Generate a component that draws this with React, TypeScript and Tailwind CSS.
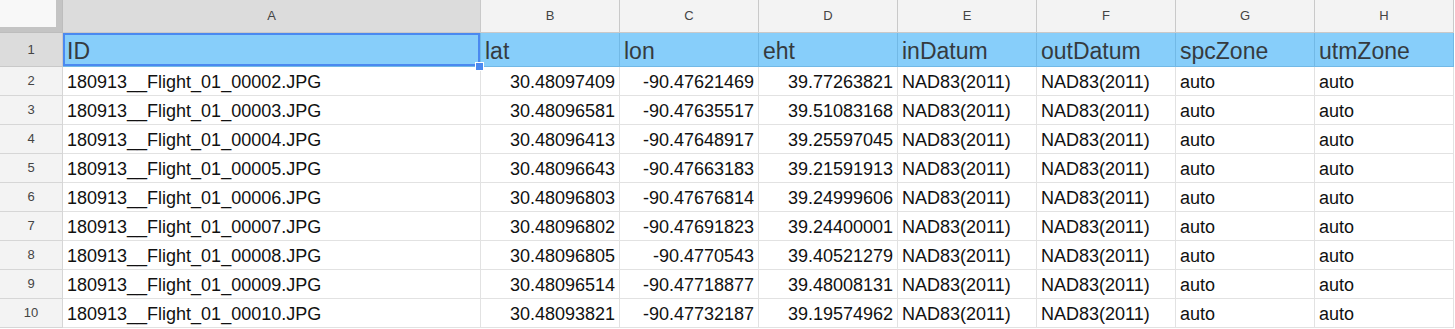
import React from 'react';

const cols = ['A', 'B', 'C', 'D', 'E', 'F', 'G', 'H'];
const headers = ['ID', 'lat', 'lon', 'eht', 'inDatum', 'outDatum', 'spcZone', 'utmZone'];

const rows: [string, string, string, string][] = [
  ['180913__Flight_01_00002.JPG', '30.48097409', '-90.47621469', '39.77263821'],
  ['180913__Flight_01_00003.JPG', '30.48096581', '-90.47635517', '39.51083168'],
  ['180913__Flight_01_00004.JPG', '30.48096413', '-90.47648917', '39.25597045'],
  ['180913__Flight_01_00005.JPG', '30.48096643', '-90.47663183', '39.21591913'],
  ['180913__Flight_01_00006.JPG', '30.48096803', '-90.47676814', '39.24999606'],
  ['180913__Flight_01_00007.JPG', '30.48096802', '-90.47691823', '39.24400001'],
  ['180913__Flight_01_00008.JPG', '30.48096805', '-90.4770543', '39.40521279'],
  ['180913__Flight_01_00009.JPG', '30.48096514', '-90.47718877', '39.48008131'],
  ['180913__Flight_01_00010.JPG', '30.48093821', '-90.47732187', '39.19574962'],
];

export default function App() {
  return (
    <div className="w-[1455px] h-[329px] overflow-hidden bg-white font-['Liberation_Sans',Arial,sans-serif]">
      <div className="grid grid-cols-[63px_418px_repeat(7,139px)] grid-rows-[33px_34px_repeat(9,29px)]">
        {/* corner */}
        <div className="bg-[#c4c4c4] border-r border-b border-[#bdbdbd] flex">
          <div className="w-[56px] h-[27px] bg-[#f8f8f8]" />
        </div>
        {cols.map((c, i) => (
          <div
            key={c}
            className={`flex items-center justify-center border-r border-b border-[#c9c9c9] text-[13px] text-[#444] ${
              i === 0 ? 'bg-[#dcdcdc]' : 'bg-[#f3f3f3]'
            }`}
          >
            {c}
          </div>
        ))}

        {/* row 1 */}
        <div className="flex items-center justify-center bg-[#dcdcdc] border-r border-b border-[#c9c9c9] text-[13px] text-[#444]">
          1
        </div>
        {headers.map((h, i) => (
          <div
            key={h}
            className={`relative flex items-center px-[4px] pt-[3px] bg-[#87cefa] text-[23px] text-[#353b3f] border-b border-r border-[#72b9e6] ${
              i === 0 ? 'shadow-[inset_0_0_0_2px_#4a89f0]' : ''
            }`}
          >
            {h}
            {i === 0 && (
              <span className="absolute -right-[4px] -bottom-[5px] w-[9px] h-[9px] bg-[#4a89f0] border border-white z-10" />
            )}
          </div>
        ))}

        {rows.map((r, ri) => (
          <React.Fragment key={ri}>
            <div className="flex items-center justify-center bg-[#f3f3f3] border-r border-b border-[#d6d6d6] text-[13px] text-[#444]">
              {ri + 2}
            </div>
            <div className="flex items-center px-[4px] pt-[3px] border-r border-b border-[#e2e2e2] text-[18px] text-[#111]">
              {r[0]}
            </div>
            {r.slice(1).map((v, vi) => (
              <div
                key={vi}
                className="flex items-center justify-end px-[4px] pt-[3px] border-r border-b border-[#e2e2e2] text-[18px] text-[#111]"
              >
                {v}
              </div>
            ))}
            {['NAD83(2011)', 'NAD83(2011)', 'auto', 'auto'].map((v, vi) => (
              <div
                key={'t' + vi}
                className="flex items-center px-[4px] pt-[3px] border-r border-b border-[#e2e2e2] text-[18px] text-[#111]"
              >
                {v}
              </div>
            ))}
          </React.Fragment>
        ))}
      </div>
    </div>
  );
}
